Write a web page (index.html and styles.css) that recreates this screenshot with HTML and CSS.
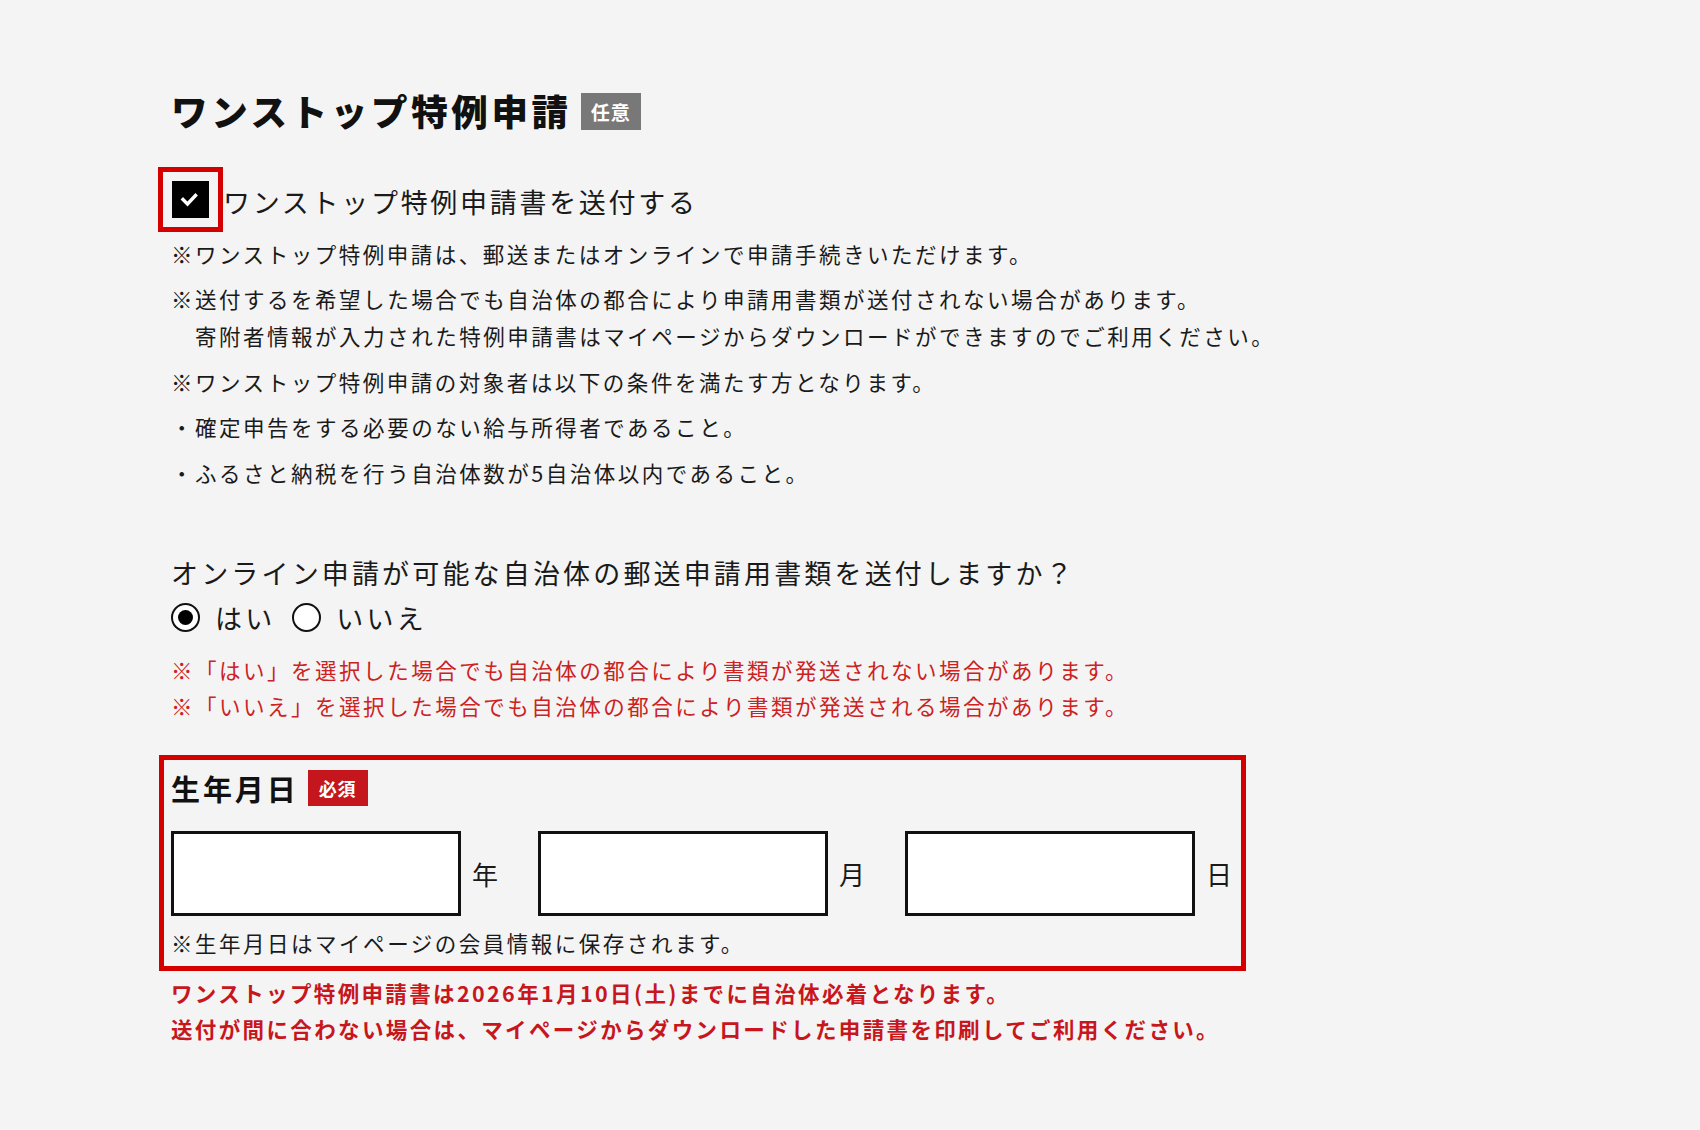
FILE: index.html
```html
<!DOCTYPE html>
<html lang="ja">
<head>
<meta charset="utf-8">
<title>ワンストップ特例申請</title>
<link rel="stylesheet" href="styles.css">
</head>
<body>
<main class="form">
  <h2 class="section-title">ワンストップ特例申請<span class="badge badge-optional">任意</span></h2>

  <label class="check-row">
    <span class="checkbox is-checked">
      <svg viewBox="0 0 37 37" width="37" height="37" aria-hidden="true">
        <polyline points="11,18.5 15.5,23 23.5,14.5" fill="none" stroke="#fff" stroke-width="3.4" stroke-linecap="square" stroke-linejoin="miter"/>
      </svg>
    </span>
    <span class="check-label">ワンストップ特例申請書を送付する</span>
  </label>

  <div class="notes">
    <p>※ワンストップ特例申請は、郵送またはオンラインで申請手続きいただけます。</p>
    <p class="hang">※送付するを希望した場合でも自治体の都合により申請用書類が送付されない場合があります。<br>寄附者情報が入力された特例申請書はマイページからダウンロードができますのでご利用ください。</p>
    <p>※ワンストップ特例申請の対象者は以下の条件を満たす方となります。</p>
    <p>・確定申告をする必要のない給与所得者であること。</p>
    <p>・ふるさと納税を行う自治体数が5自治体以内であること。</p>
  </div>

  <p class="question">オンライン申請が可能な自治体の郵送申請用書類を送付しますか？</p>
  <div class="radio-row">
    <label class="radio-option"><span class="radio is-checked"></span><span class="radio-label">はい</span></label>
    <label class="radio-option"><span class="radio"></span><span class="radio-label">いいえ</span></label>
  </div>
  <p class="caution">※「はい」を選択した場合でも自治体の都合により書類が発送されない場合があります。<br>※「いいえ」を選択した場合でも自治体の都合により書類が発送される場合があります。</p>

  <section class="birth">
    <h3 class="birth-head">生年月日<span class="badge badge-required">必須</span></h3>
    <div class="date-row">
      <div class="date-field"><input class="date-input" type="text" aria-label="年"><span class="date-unit">年</span></div>
      <div class="date-field"><input class="date-input" type="text" aria-label="月"><span class="date-unit">月</span></div>
      <div class="date-field"><input class="date-input" type="text" aria-label="日"><span class="date-unit">日</span></div>
    </div>
    <p class="birth-note">※生年月日はマイページの会員情報に保存されます。</p>
  </section>

  <p class="deadline">ワンストップ特例申請書は2026年1月10日(土)までに自治体必着となります。<br>送付が間に合わない場合は、マイページからダウンロードした申請書を印刷してご利用ください。</p>
</main>
</body>
</html>
```

FILE: styles.css
```css
html, body {
  margin: 0;
  background: #f4f4f4;
}

body {
  font-family: "Noto Sans CJK JP", "Noto Sans", sans-serif;
  color: #1a1a1a;
}

.form {
  padding: 86px 0 60px 171px;
}

/* tracking is relative to each element's own font size */
.form * {
  letter-spacing: 0.1em;
}

p {
  margin: 0;
}

/* Section heading with status badge */
.section-title {
  display: flex;
  align-items: center;
  margin: 0;
  font-size: 36.5px;
  line-height: 50px;
  font-weight: 900;
  color: #111;
}

.badge {
  display: inline-flex;
  align-items: center;
  justify-content: center;
  color: #fff;
  font-weight: 700;
  line-height: 1;
}

.form .badge {
  letter-spacing: 0.05em;
}

.badge-optional {
  width: 60px;
  height: 37px;
  margin-left: 9px;
  background: #787878;
  font-size: 19px;
}

.badge-required {
  width: 60px;
  height: 36px;
  margin-left: 9px;
  background: #c4161c;
  font-size: 18px;
}

/* Checkbox */
.check-row {
  display: flex;
  align-items: center;
  height: 40px;
  margin-top: 43px;
}

.checkbox {
  display: flex;
  flex-shrink: 0;
  width: 37px;
  height: 37px;
  margin: 0 14px 0 1px;
  background: #000;
  outline: 5px solid #d40000;
  outline-offset: 9px;
}

.check-label {
  font-size: 27px;
  line-height: 40px;
  padding-top: 6px;
}

/* Notes */
.notes {
  margin-top: 15.5px;
  font-size: 21.5px;
  line-height: 37px;
}

.form .notes p,
.form .caution,
.form .birth-note,
.form .question,
.form .radio-label {
  letter-spacing: 0.117em;
}

.form .deadline {
  letter-spacing: 0.11em;
}

.notes p + p {
  margin-top: 8.5px;
}

.notes .hang {
  padding-left: 1.117em;
  text-indent: -1.117em;
}

/* Question + radios */
.question {
  margin-top: 59.5px;
  font-size: 27px;
  line-height: 45px;
}

.radio-row {
  display: flex;
  align-items: center;
  font-size: 27px;
  line-height: 45px;
}

.radio-option {
  display: flex;
  align-items: center;
  margin-right: 17px;
}

.radio {
  display: flex;
  align-items: center;
  justify-content: center;
  box-sizing: border-box;
  width: 29px;
  height: 29px;
  border: 2.5px solid #111;
  border-radius: 50%;
  background: #fff;
}

.radio.is-checked::after {
  content: "";
  width: 15px;
  height: 15px;
  border-radius: 50%;
  background: #000;
}

.radio-label {
  margin-left: 15px;
}

.caution {
  margin-top: 11.5px;
  color: #cc2222;
  font-size: 21.5px;
  line-height: 36px;
}

/* Birth date block */
.birth {
  width: 1063px;
  margin-top: 43px;
  outline: 5px solid #d40000;
  outline-offset: 7px;
}

.birth-head {
  display: flex;
  align-items: center;
  margin: 0;
  font-size: 29px;
  line-height: 42px;
  font-weight: 700;
  color: #111;
}

.date-row {
  display: flex;
  margin-top: 22px;
}

.date-field {
  display: flex;
  flex-shrink: 0;
  align-items: center;
  width: 367px;
}

.date-field:last-child {
  width: auto;
}

.date-input {
  box-sizing: border-box;
  width: 290px;
  height: 85px;
  margin: 0 11px 0 0;
  padding: 0 12px;
  border: 3px solid #111;
  border-radius: 0;
  background: #fff;
  font: inherit;
  font-size: 24px;
}

.date-unit {
  font-size: 26px;
}

.birth-note {
  margin-top: 11px;
  font-size: 21.5px;
  line-height: 32px;
}

.deadline {
  margin-top: 16.5px;
  color: #c8161d;
  font-weight: 700;
  font-size: 21.5px;
  line-height: 36px;
}
```
